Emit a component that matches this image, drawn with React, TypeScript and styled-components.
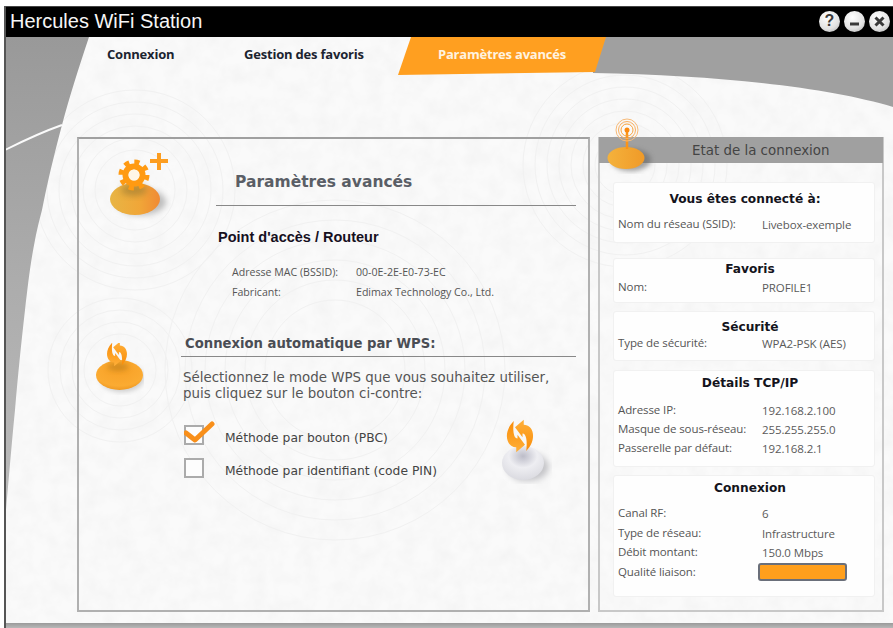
import React from 'react';
import styled, { createGlobalStyle } from 'styled-components';

const GlobalStyle = createGlobalStyle`
  html, body {
    margin: 0;
    padding: 0;
    background: #fff;
    overflow: hidden;
  }
`;

const tahoma = `"Open Sans", "Noto Sans", sans-serif`;
const verdana = `"DejaVu Sans", "Liberation Sans", sans-serif`;

const Page = styled.div`
  width: 893px;
  height: 628px;
  padding: 6px 0 0 4px;
  box-sizing: border-box;
`;

const Window = styled.div`
  width: 889px;
  height: 622px;
  display: flex;
  flex-direction: column;
  border-left: 2px solid #555;
  box-sizing: border-box;
  background: #f8f8f8;
`;

const TitleBar = styled.div`
  height: 31px;
  flex: none;
  background: #000;
  border-top: 1px solid #444;
  box-sizing: border-box;
  display: flex;
  align-items: center;
  justify-content: space-between;
  padding: 0 3px 2px 4px;
`;

const AppName = styled.div`
  font: 20px "Liberation Sans", Arial, sans-serif;
  color: #f6f6f6;
`;

const WindowButtons = styled.div`
  display: flex;
  gap: 4px;
`;

const WindowButton = styled.div`
  width: 21px;
  height: 21px;
  border-radius: 50%;
  background: radial-gradient(circle at 40% 30%, #fff, #e2e2e2 60%, #a8a8a8);
  display: flex;
  align-items: center;
  justify-content: center;
  font: bold 16px "Liberation Sans", Arial, sans-serif;
  color: #3a3a3a;
`;

const Body = styled.div`
  position: relative;
  flex: 1;
  overflow: hidden;
`;

const Backdrop = styled.svg`
  position: absolute;
  left: 0;
  top: 0;
`;

const TabBar = styled.div`
  position: relative;
  height: 38px;
  display: flex;
  padding-left: 101px;
`;

const Tab = styled.div<{ $active?: boolean; $width: number }>`
  width: ${(p) => p.$width}px;
  height: 38px;
  box-sizing: border-box;
  padding-top: 9px;
  text-align: ${(p) => (p.$active ? 'center' : 'left')};
  font: bold 13px/16px ${tahoma};
  letter-spacing: -0.2px;
  color: ${(p) => (p.$active ? '#fff3e0' : '#1c2430')};
  background: ${(p) => (p.$active ? '#ff9f20' : 'transparent')};
  clip-path: ${(p) =>
    p.$active ? 'polygon(13px 0, 100% 0, 197px 35px, 0 100%)' : 'none'};
`;

const Panels = styled.div`
  position: relative;
  display: flex;
  gap: 8px;
  margin-top: 62px;
  padding-left: 71px;
`;

const MainPanel = styled.div`
  width: 513px;
  height: 475px;
  box-sizing: border-box;
  border: 2px solid #b0b0b0;
  border-top-color: #a0a0a0;
`;

const Section = styled.div<{ $left: number; $top: number; $gap: number }>`
  display: flex;
  gap: ${(p) => p.$gap}px;
  padding-left: ${(p) => p.$left}px;
  margin-top: ${(p) => p.$top}px;
`;

const SectionBody = styled.div`
  flex: 1;
  padding-right: 12px;
`;

const Heading = styled.div`
  padding: 33px 0 13px 19px;
  font: bold 15.5px/20px ${verdana};
  color: #5a5e66;
  border-bottom: 1px solid #888;
`;

const SubHeading = styled.div`
  margin: 23px 0 17px 2px;
  font: bold 14.5px/16px "Liberation Sans", Arial, sans-serif;
  color: #16101e;
`;

const InfoRow = styled.div`
  display: flex;
  height: 20px;
  align-items: center;
  margin-left: 16px;
  font: 10.6px ${tahoma};
  white-space: nowrap;
  color: #555;
`;

const InfoLabel = styled.span`
  width: 124px;
`;

const WpsTitle = styled.div`
  padding: 0 0 3px 4px;
  font: bold 13.2px/18px ${verdana};
  color: #4a4d54;
  border-bottom: 1px solid #888;
`;

const Intro = styled.p`
  margin: 13px 0 23px 2px;
  font: 13.4px/16px ${verdana};
  white-space: nowrap;
  color: #555;
`;

const OptionsRow = styled.div`
  display: flex;
  justify-content: space-between;
  padding-right: 24px;
`;

const Options = styled.div`
  display: flex;
  flex-direction: column;
  gap: 13px;
  padding-left: 3px;
`;

const Option = styled.div`
  display: flex;
  gap: 21px;
  height: 20px;
  font: 12.3px/20px ${verdana};
  color: #444;
`;

const OptionText = styled.span`
  padding-top: 3px;
`;

const CheckBox = styled.div`
  position: relative;
  width: 20px;
  height: 20px;
  box-sizing: border-box;
  border: 2px solid #ababab;
  background: #fdfdfd;
`;

const CheckMark = styled.svg`
  position: absolute;
  left: -2px;
  top: -7px;
`;

const BigDisc = styled.svg`
  margin-top: -7px;
`;

const SidePanel = styled.div`
  position: relative;
  width: 286px;
  height: 475px;
  box-sizing: border-box;
  border: 2px solid #c8c8c8;
  border-top: 0;
`;

const SideHeader = styled.div`
  height: 26px;
  margin: 0 -1px 19px;
  padding-left: 93px;
  background: #a0a0a0;
  font: 13.4px/27px ${verdana};
  white-space: nowrap;
  color: #444;
`;

const RadioIcon = styled.svg`
  position: absolute;
  left: 5px;
  top: -19px;
`;

const Cards = styled.div`
  display: flex;
  flex-direction: column;
  margin-left: 13px;
  width: 262px;
`;

const Card = styled.div<{ $height: number; $after: number }>`
  height: ${(p) => p.$height}px;
  margin-bottom: ${(p) => p.$after}px;
  box-sizing: border-box;
  background: #fefefe;
  border: 1px solid #f1f1f1;
  border-radius: 3px;
  padding: 0 4px;
`;

const CardTitle = styled.div<{ $top: number; $shift?: number }>`
  padding-top: ${(p) => p.$top}px;
  padding-left: ${(p) => p.$shift ?? 12}px;
  text-align: center;
  font: bold 12.2px/16px ${verdana};
  color: #14141c;
`;

const CardRow = styled.div<{ $top: number }>`
  display: flex;
  align-items: center;
  height: 16px;
  margin-top: ${(p) => p.$top}px;
  font: 11.5px/16px ${tahoma};
  letter-spacing: -0.1px;
  white-space: nowrap;
  color: #555;
`;

const CardLabel = styled.span`
  width: 144px;
  flex: none;
`;

const CardValue = styled.span`
  padding-top: 2px;
  color: #5a5a5a;
`;

const QualityBar = styled.div`
  width: 89px;
  height: 18px;
  margin-left: -4px;
  box-sizing: border-box;
  border: 2px solid #6a6f7a;
  border-radius: 3px;
  background: #ff9f1c;
`;

const Footer = styled.div`
  height: 5px;
  flex: none;
  background: linear-gradient(#9a9a9a, #b8b8b8);
`;

const ringSets = [
  { x: 135, y: 190, radii: [40, 52, 64, 76, 88, 100] },
  { x: 120, y: 370, radii: [36, 48, 60, 72] },
  { x: 335, y: 370, radii: [70, 90, 110, 130, 150, 170] },
  { x: 625, y: 165, radii: [30, 42, 54, 66, 78, 90, 102] },
];

const arrowPath = 'M-4 -7 L3 -13 L3 -9 C11 -9 14 3 5 12 C6 4 5 -2 2 -2 L2 1 Z';

const PageBackdrop = () => (
  <Backdrop width={887} height={586} viewBox="6 37 887 586">
    <defs>
      <filter id="paper" x="0" y="0" width="100%" height="100%">
        <feTurbulence type="fractalNoise" baseFrequency="0.06" numOctaves={3} seed={4} />
        <feColorMatrix values="0 0 0 0 0.8  0 0 0 0 0.8  0 0 0 0 0.8  0.5 0 0 0 -0.16" />
      </filter>
      <linearGradient id="leftGrey" x1="0" y1="0" x2="0" y2="1">
        <stop offset="0" stopColor="#999" />
        <stop offset="0.5" stopColor="#acacac" />
        <stop offset="1" stopColor="#bcbcbc" />
      </linearGradient>
    </defs>
    <rect x="6" y="37" width="887" height="586" fill="#fafafa" />
    <rect x="6" y="37" width="887" height="586" filter="url(#paper)" />
    {ringSets.map((set) =>
      set.radii.map((r) => (
        <circle key={`${set.x}-${r}`} cx={set.x} cy={set.y} r={r} fill="none" stroke="#f1f1f1" />
      )),
    )}
    <path
      d="M0 37 L89 37 C78 70 70 95 62 125 C54 155 48 180 42 210 C38 225 36 235 35 240 C30 265 28 285 25 310 C21 345 18 375 15 410 C11 450 8 490 5 520 L0 520 Z"
      fill="url(#leftGrey)"
    />
    <path d="M5 150 C25 140 45 131 62 125" fill="none" stroke="#fafafa" strokeWidth="2" />
    <path d="M590 37 L893 37 L893 107 C830 88 720 75 593 73 Z" fill="#a0a0a0" />
  </Backdrop>
);

const RefreshArrows = ({ x, y, scale, id }: { x: number; y: number; scale: number; id: string }) => (
  <g transform={`translate(${x} ${y}) scale(${scale})`}>
    <defs>
      <linearGradient id={id} x1="0" y1="0" x2="0" y2="1">
        <stop offset="0" stopColor="#ffb03a" />
        <stop offset="1" stopColor="#f98c08" />
      </linearGradient>
    </defs>
    <path d={arrowPath} fill={`url(#${id})`} />
    <path d={arrowPath} fill={`url(#${id})`} transform="rotate(180)" />
  </g>
);

const GearDisc = () => (
  <svg width={64} height={72} viewBox="0 0 64 72" style={{ flex: 'none', marginTop: 11 }}>
    <defs>
      <linearGradient id="gearDiscFill" x1="0" y1="0" x2="1" y2="0">
        <stop offset="0" stopColor="#e8b545" />
        <stop offset="0.6" stopColor="#f0a638" />
        <stop offset="1" stopColor="#f08a34" />
      </linearGradient>
      <filter id="soft1" x="-40%" y="-40%" width="180%" height="180%">
        <feGaussianBlur stdDeviation="3" />
      </filter>
    </defs>
    <ellipse cx="34" cy="52" rx="25" ry="13" fill="#bbb" filter="url(#soft1)" />
    <ellipse cx="28" cy="49" rx="25" ry="16" fill="url(#gearDiscFill)" />
    <ellipse cx="27" cy="40" rx="13" ry="6" fill="#9a7a30" opacity="0.6" filter="url(#soft1)" />
    <circle cx="27" cy="25" r="13" fill="none" stroke="#ff9a12" strokeWidth="5" strokeDasharray="5.1 5.1" />
    <circle cx="27" cy="25" r="8.5" fill="none" stroke="#ff9a12" strokeWidth="6" />
    <circle cx="27" cy="25" r="5.5" fill="#fff6e6" />
    <path d="M52 3 V20 M43 11 H61" stroke="#fc9d20" strokeWidth="4" />
  </svg>
);

const WpsDisc = () => (
  <svg width={48} height={52} viewBox="0 0 48 52" style={{ flex: 'none', marginTop: 8 }}>
    <defs>
      <radialGradient id="wpsDiscFill" cx="0.5" cy="0.3" r="0.8">
        <stop offset="0" stopColor="#f8a026" />
        <stop offset="0.7" stopColor="#fbab32" />
        <stop offset="1" stopColor="#e88e18" />
      </radialGradient>
      <filter id="soft2" x="-40%" y="-40%" width="180%" height="180%">
        <feGaussianBlur stdDeviation="2.5" />
      </filter>
    </defs>
    <ellipse cx="26" cy="35" rx="22" ry="14" fill="#ccc" filter="url(#soft2)" />
    <ellipse cx="23.5" cy="32" rx="23.5" ry="15" fill="url(#wpsDiscFill)" />
    <ellipse cx="22" cy="24" rx="11" ry="4" fill="#b07818" opacity="0.5" filter="url(#soft2)" />
    <RefreshArrows x={21} y={11} scale={0.95} id="wpsArrows" />
  </svg>
);

const WhiteDisc = () => (
  <BigDisc width={50} height={66} viewBox="0 0 50 66">
    <defs>
      <radialGradient id="whiteDiscFill" cx="0.5" cy="0.3" r="0.75">
        <stop offset="0" stopColor="#bcbcc8" />
        <stop offset="0.45" stopColor="#eeeef2" />
        <stop offset="1" stopColor="#d8d8de" />
      </radialGradient>
      <filter id="soft3" x="-40%" y="-40%" width="180%" height="180%">
        <feGaussianBlur stdDeviation="3" />
      </filter>
    </defs>
    <ellipse cx="26" cy="49" rx="21" ry="14" fill="#c4c4c8" filter="url(#soft3)" />
    <ellipse cx="21" cy="45" rx="21" ry="17" fill="url(#whiteDiscFill)" />
    <RefreshArrows x={18} y={18} scale={1.25} id="whiteArrows" />
  </BigDisc>
);

const Radio = () => (
  <RadioIcon width={52} height={56} viewBox="0 0 52 56">
    <defs>
      <linearGradient id="radioFill" x1="0" y1="0" x2="1" y2="0">
        <stop offset="0" stopColor="#f4b23c" />
        <stop offset="1" stopColor="#f09a28" />
      </linearGradient>
      <filter id="soft4" x="-40%" y="-40%" width="180%" height="180%">
        <feGaussianBlur stdDeviation="2.5" />
      </filter>
    </defs>
    <ellipse cx="26" cy="42" rx="20" ry="11" fill="#666" opacity="0.6" filter="url(#soft4)" />
    <ellipse cx="21" cy="40" rx="18.5" ry="11" fill="url(#radioFill)" />
    <path d="M22 12 V31" stroke="#fb9418" strokeWidth="2.5" />
    <circle cx="22" cy="12" r="2.5" fill="#fb8a10" />
    <circle cx="22" cy="12" r="6" fill="none" stroke="#f9a33c" />
    <circle cx="22" cy="12" r="8.5" fill="none" stroke="#f9b060" />
    <circle cx="22" cy="12" r="11" fill="none" stroke="#f7bb7a" />
  </RadioIcon>
);

const App = () => (
  <Page>
    <GlobalStyle />
    <Window>
      <TitleBar>
        <AppName>Hercules WiFi Station</AppName>
        <WindowButtons>
          <WindowButton>?</WindowButton>
          <WindowButton>
            <svg width={13} height={13} viewBox="0 0 13 13">
              <path d="M2 9 H11" stroke="#3a3a3a" strokeWidth="3" />
            </svg>
          </WindowButton>
          <WindowButton>
            <svg width={13} height={13} viewBox="0 0 13 13">
              <path d="M2.5 2.5 L10.5 10.5 M10.5 2.5 L2.5 10.5" stroke="#3a3a3a" strokeWidth="3" />
            </svg>
          </WindowButton>
        </WindowButtons>
      </TitleBar>
      <Body>
        <PageBackdrop />
        <TabBar>
          <Tab $width={137}>Connexion</Tab>
          <Tab $width={154}>Gestion des favoris</Tab>
          <Tab $active $width={208}>Paramètres avancés</Tab>
        </TabBar>
        <Panels>
          <MainPanel>
            <Section $left={28} $top={0} $gap={45}>
              <GearDisc />
              <SectionBody>
                <Heading>Paramètres avancés</Heading>
                <SubHeading>Point d'accès / Routeur</SubHeading>
                <InfoRow>
                  <InfoLabel>Adresse MAC (BSSID):</InfoLabel>
                  00-0E-2E-E0-73-EC
                </InfoRow>
                <InfoRow>
                  <InfoLabel>Fabricant:</InfoLabel>
                  Edimax Technology Co., Ltd.
                </InfoRow>
              </SectionBody>
            </Section>
            <Section $left={17} $top={33} $gap={37}>
              <WpsDisc />
              <SectionBody>
                <WpsTitle>Connexion automatique par WPS:</WpsTitle>
                <Intro>
                  Sélectionnez le mode WPS que vous souhaitez utiliser,
                  <br />
                  puis cliquez sur le bouton ci-contre:
                </Intro>
                <OptionsRow>
                  <Options>
                    <Option>
                      <CheckBox>
                        <CheckMark width={32} height={24} viewBox="0 0 32 24">
                          <path
                            d="M2 13 L11 20 L28 4"
                            fill="none"
                            stroke="#f88f1a"
                            strokeWidth="5"
                            strokeLinecap="round"
                            strokeLinejoin="round"
                          />
                        </CheckMark>
                      </CheckBox>
                      <OptionText>Méthode par bouton (PBC)</OptionText>
                    </Option>
                    <Option>
                      <CheckBox />
                      <OptionText>Méthode par identifiant (code PIN)</OptionText>
                    </Option>
                  </Options>
                  <WhiteDisc />
                </OptionsRow>
              </SectionBody>
            </Section>
          </MainPanel>
          <SidePanel>
            <SideHeader>Etat de la connexion</SideHeader>
            <Radio />
            <Cards>
              <Card $height={61} $after={15}>
                <CardTitle $top={8} $shift={2}>Vous êtes connecté à:</CardTitle>
                <CardRow $top={9}>
                  <CardLabel>Nom du réseau (SSID):</CardLabel>
                  <CardValue>Livebox-exemple</CardValue>
                </CardRow>
              </Card>
              <Card $height={45} $after={8}>
                <CardTitle $top={2}>Favoris</CardTitle>
                <CardRow $top={2}>
                  <CardLabel>Nom:</CardLabel>
                  <CardValue>PROFILE1</CardValue>
                </CardRow>
              </Card>
              <Card $height={50} $after={9}>
                <CardTitle $top={7}>Sécurité</CardTitle>
                <CardRow $top={0}>
                  <CardLabel>Type de sécurité:</CardLabel>
                  <CardValue>WPA2-PSK (AES)</CardValue>
                </CardRow>
              </Card>
              <Card $height={97} $after={8}>
                <CardTitle $top={4}>Détails TCP/IP</CardTitle>
                <CardRow $top={11}>
                  <CardLabel>Adresse IP:</CardLabel>
                  <CardValue>192.168.2.100</CardValue>
                </CardRow>
                <CardRow $top={3}>
                  <CardLabel>Masque de sous-réseau:</CardLabel>
                  <CardValue>255.255.255.0</CardValue>
                </CardRow>
                <CardRow $top={3}>
                  <CardLabel>Passerelle par défaut:</CardLabel>
                  <CardValue>192.168.2.1</CardValue>
                </CardRow>
              </Card>
              <Card $height={122} $after={0}>
                <CardTitle $top={4}>Connexion</CardTitle>
                <CardRow $top={9}>
                  <CardLabel>Canal RF:</CardLabel>
                  <CardValue>6</CardValue>
                </CardRow>
                <CardRow $top={4}>
                  <CardLabel>Type de réseau:</CardLabel>
                  <CardValue>Infrastructure</CardValue>
                </CardRow>
                <CardRow $top={3}>
                  <CardLabel>Débit montant:</CardLabel>
                  <CardValue>150.0 Mbps</CardValue>
                </CardRow>
                <CardRow $top={4}>
                  <CardLabel>Qualité liaison:</CardLabel>
                  <QualityBar />
                </CardRow>
              </Card>
            </Cards>
          </SidePanel>
        </Panels>
      </Body>
      <Footer />
    </Window>
  </Page>
);

export default App;
